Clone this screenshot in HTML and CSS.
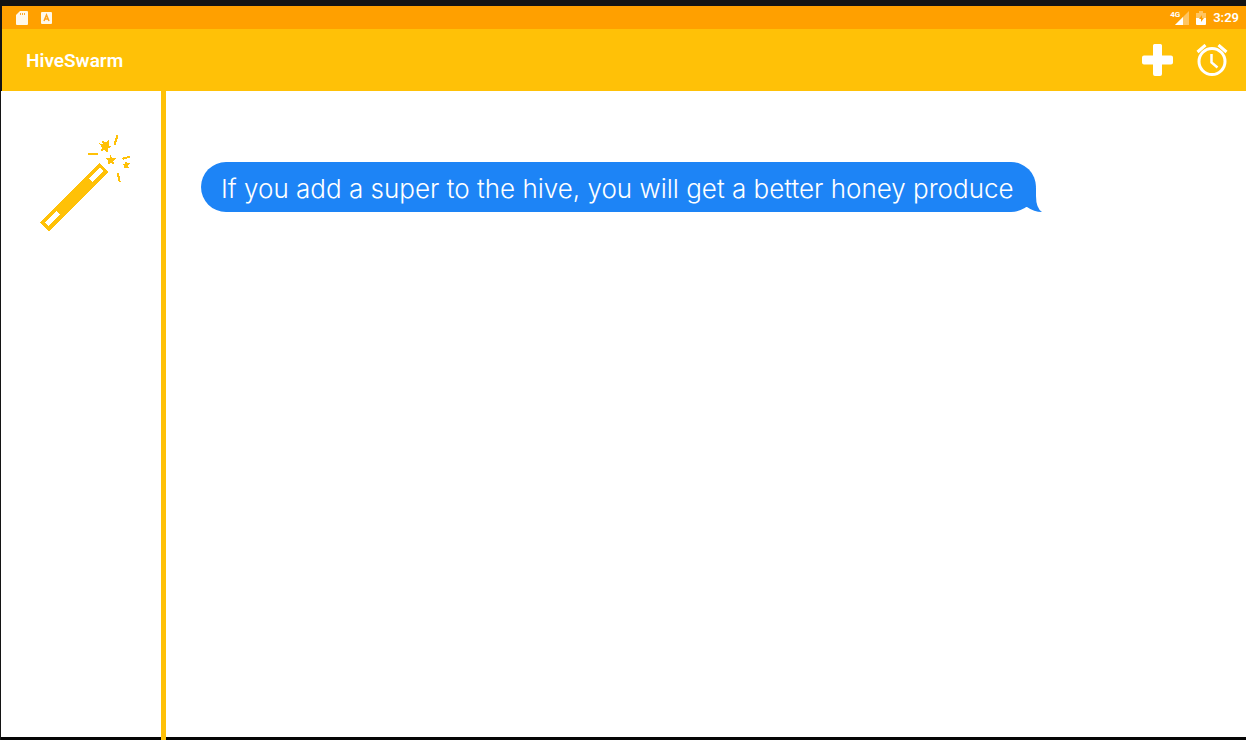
FILE: index.html
```html
<!DOCTYPE html>
<html lang="en">
<head>
<meta charset="utf-8">
<meta name="viewport" content="width=device-width, initial-scale=1">
<title>HiveSwarm</title>
<link rel="stylesheet" href="styles.css">
</head>
<body>
<div class="device">
  <div class="status-bar">
    <div class="status-group notices">
      <svg class="status-icon" viewBox="0 0 12 14" aria-hidden="true"><path fill="#fff8ea" d="M4 0h7q1 0 1 1v12q0 1-1 1H1q-1 0-1-1V4z"/><path fill="#ffa92b" d="M4 2h1v2H4zM6 2h1v2H6zM8 2h1v2H8z"/></svg>
      <svg class="status-icon" viewBox="0 0 12 14" aria-hidden="true"><rect x="0" y="1" width="11" height="12" rx="1" fill="#fff8ea"/><path fill="none" stroke="#ffa31a" stroke-width="1.5" d="M3 10L5.5 4L8 10M4 8h3"/></svg>
    </div>
    <div class="status-group system">
      <div class="signal">
        <span class="network">4G</span>
        <svg class="signal-icon" viewBox="0 0 14 14" aria-hidden="true"><path fill="#ffc562" d="M14 0v14H0z"/><path fill="#fff" d="M8 6v8H0z"/></svg>
      </div>
      <svg class="battery-icon" viewBox="0 0 10 14" aria-hidden="true"><path fill="#ffc562" d="M3 0h4v2h3v5H0V2h3z"/><path fill="#fff" d="M0 7h10v6q0 1-1 1H1q-1 0-1-1z"/><path fill="#ffa000" d="M6 4L3 8h2v3l3-4H6z"/></svg>
      <time class="clock">3:29</time>
    </div>
  </div>
  <header class="app-bar">
    <h1 class="title">HiveSwarm</h1>
    <div class="actions">
      <button class="action" type="button" aria-label="Add">
        <svg class="action-icon" viewBox="0 0 32 32" aria-hidden="true"><path fill="#fff" d="M12.500 0h6q1.500 0 1.500 1.500V11.500h9q2 0 2 2v5q0 2-2 2H20V30q0 2-2 2h-5q-2 0-2-2V20.500H2q-2 0-2-2v-5q0-2 2-2h9V1.500Q11 0 12.500 0z"/></svg>
      </button>
      <button class="action" type="button" aria-label="Alarms">
        <svg class="action-icon" viewBox="0 0 32 32" aria-hidden="true"><g fill="none" stroke="#fff"><circle cx="16" cy="17.500" r="13" stroke-width="3"/><path stroke-width="2.500" d="M15.500 10v8.500l6 5"/><path stroke-width="3" d="M1.500 8l8-7M22.500 1l8 7"/></g></svg>
      </button>
    </div>
  </header>
  <div class="content">
    <aside class="sidebar">
      <svg class="wand" viewBox="30 27 276 294" role="img" aria-label="Magic wand">
        <g fill="#ffc107">
          <path fill-rule="evenodd" d="M209 115L236 141L57 320L31 293zM210 129L177 161L188 172L221 138zM79 259L46 292L55 303L89 269z"/>
          <path d="M215 46l10 6 11-6v14l8 6-10 4-2 14-8-9-13 4 5-12-8-12 10 2z"/>
          <path d="M242 90l5 10h10l-7 8 3 11-11-5-9 5 2-11-7-8 10-1z"/>
          <path d="M288 109l4 6h7l-4 7 1 8h-14l1-7-5-7h7z"/>
        </g>
        <path fill="none" stroke="#ffc107" stroke-width="6" d="M262 31v6l-3 4v7l-4 4v7M174 87h30M277 102l8-3 8-2 7-2M264 144v9l3 4v8l3 6"/>
      </svg>
    </aside>
    <div class="divider"></div>
    <main class="chat">
      <p class="bubble">If you add a super to the hive, you will get a better honey produce<svg class="tail" viewBox="0 0 24 24" aria-hidden="true"><path fill="#1d84f6" d="M0 0H18V8Q18 20 24 24Q16 24 9 19L0 20z"/></svg></p>
    </main>
  </div>
</div>
</body>
</html>
```
FILE: styles.css
```css
* {
  box-sizing: border-box;
}

body {
  margin: 0;
  background: #fff;
  color: #fff;
  font-family: Roboto, "Liberation Sans", sans-serif;
}

.device {
  display: flex;
  flex-direction: column;
  min-height: 100vh;
  border-top: 6px solid #141414;
}

.status-bar,
.app-bar {
  display: flex;
  align-items: center;
  justify-content: space-between;
  border-left: 2px solid #141414;
}

.status-bar {
  height: 23px;
  padding: 0 7px 0 14px;
  background: #ffa000;
}

.status-group {
  display: flex;
  align-items: center;
}

.notices {
  gap: 13px;
}

.system {
  gap: 7px;
}

.status-icon {
  display: block;
  width: 12px;
  height: 14px;
}

.signal {
  display: flex;
  align-items: flex-start;
}

.network {
  margin-right: -5px;
  font-size: 8px;
  line-height: 8px;
  font-weight: 700;
}

.signal-icon {
  width: 14px;
  height: 14px;
}

.battery-icon {
  width: 10px;
  height: 14px;
}

.clock {
  font-size: 13px;
  line-height: 16px;
  font-weight: 600;
}

.app-bar {
  height: 62px;
  padding: 0 18px 0 24px;
  background: #ffc107;
}

.title {
  margin: 0;
  padding-top: 2px;
  font-size: 19px;
  line-height: 24px;
  font-weight: 600;
}

.actions {
  display: flex;
  gap: 22px;
}

.action {
  padding: 0;
  border: 0;
  background: none;
  cursor: pointer;
}

.action-icon {
  display: block;
  width: 32px;
  height: 32px;
}

.content {
  display: flex;
  flex: 1;
  border-left: 1px solid #141414;
}

.sidebar,
.chat {
  border-bottom: 3px solid #050505;
}

.sidebar {
  width: 160px;
  padding: 43px 0 0 39px;
}

.wand {
  display: block;
  width: 92px;
  height: 98px;
  shape-rendering: crispEdges;
}

.divider {
  width: 5px;
  background: #ffc107;
}

.chat {
  flex: 1;
  padding: 71px 35px 0;
}

.bubble {
  position: relative;
  width: fit-content;
  margin: 0;
  padding: 11px 22px 7px 20px;
  border-radius: 28px;
  background: #1d84f6;
  font-family: Inter, "Liberation Sans", sans-serif;
  font-size: 26px;
  font-weight: 320;
  line-height: 32px;
}

.tail {
  position: absolute;
  right: -6px;
  bottom: 0;
  width: 24px;
  height: 24px;
}
```
